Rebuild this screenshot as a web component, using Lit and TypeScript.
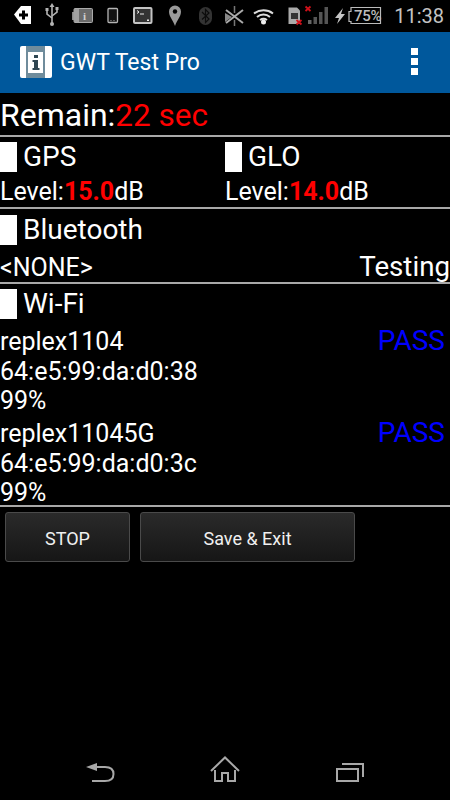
import { LitElement, html, css, svg } from "lit";
import { customElement } from "lit/decorators.js";

const G = "#b4b4b4";
const statusIcons = svg`
  <!-- plus tag -->
  <path d="M14 14.500 L21 6 H31 V24 H21 Z" fill="#fff"/>
  <path d="M22 10.500h3v3h3v3h-3v3h-3v-3h-3v-3h3z" fill="#000"/>
  <!-- usb -->
  <g fill="none" stroke="${G}" stroke-width="1.600">
    <path d="M52 6V24"/><path d="M47 10v4l5 4M57 9v3l-5 4"/>
  </g>
  <path d="M52 3l2.500 4h-5z" fill="${G}"/><circle cx="52" cy="24" r="2" fill="${G}"/>
  <rect x="45.500" y="8" width="3" height="3" fill="${G}"/><rect x="55.500" y="7" width="3" height="3" fill="${G}"/>
  <!-- battery info -->
  <rect x="72" y="12" width="2" height="8" fill="#888"/>
  <rect x="74" y="8.500" width="18.500" height="14" rx="1" fill="#6a6a6a" stroke="#aaa" stroke-width="1"/>
  <rect x="74" y="9" width="5" height="13" fill="#a0a0a0"/>
  <text x="83" y="20" font-family="Liberation Serif" font-size="11" font-weight="700" fill="#d0d0d0">i</text>
  <!-- phone -->
  <rect x="108" y="8.500" width="9.500" height="14" rx="1" fill="#111" stroke="${G}" stroke-width="1.300"/>
  <circle cx="111" cy="20.500" r=".6" fill="${G}"/><circle cx="114" cy="20.500" r=".6" fill="${G}"/>
  <!-- terminal -->
  <rect x="134" y="8" width="17.500" height="15" rx="1" fill="#333" stroke="#c4c4c4" stroke-width="2"/>
  <path d="M137 10.500l2 1.500-2 1.500M140 14h4" stroke="#eee" stroke-width="1" fill="none"/>
  <rect x="147" y="19.500" width="2" height="1.500" fill="#eee"/>
  <!-- pin -->
  <path d="M175 26 C172.500 19 169 16.500 169 11.500 A6 6 0 0 1 181 11.500 C181 16.500 177.500 19 175 26Z" fill="#999"/>
  <circle cx="175" cy="11.500" r="2.200" fill="#000"/>
  <!-- bluetooth -->
  <rect x="199" y="7" width="13" height="18" rx="6.500" fill="#333"/>
  <path d="M202 12l7 7-3.500 3.500V9.500L209 13l-7 6.500" fill="none" stroke="#0c0c0c" stroke-width="1.200"/>
  <!-- x antenna -->
  <path d="M226 10l17 13M243 10l-17 13" stroke="#aaa" stroke-width="2"/>
  <path d="M225 13l7 4-7 5z" fill="#888"/>
  <path d="M234.500 6v7M234.500 20v6" stroke="#777" stroke-width="1.500"/>
  <!-- wifi -->
  <g fill="none" stroke="#ddd" stroke-width="2">
    <path d="M254 13.500a16 16 0 0 1 19 0"/><path d="M257 17a10 10 0 0 1 13 0"/><path d="M260 20a6 6 0 0 1 7 0"/>
  </g>
  <circle cx="263.500" cy="22" r="2.500" fill="#eee"/>
  <!-- sim -->
  <path d="M288.500 7.500H297l3 3V24H288.500Z" fill="#aaa"/>
  <rect x="291" y="13" width="7" height="6" fill="#333"/>
  <path d="M296.500 20l5 4.500M301.500 20l-5 4.500" stroke="#d0101a" stroke-width="1.800"/>
  <path d="M305.500 6.500l5 4.500M310.500 6.500l-5 4.500" stroke="#d0101a" stroke-width="1.800"/>
  <!-- signal -->
  <rect x="308" y="20" width="3.500" height="4" fill="#666"/>
  <rect x="313.500" y="17" width="3.500" height="7" fill="#555"/>
  <rect x="319" y="12" width="3.500" height="12" fill="#555"/>
  <rect x="324.500" y="7" width="3.500" height="17" fill="#555"/>
  <!-- bolt -->
  <path d="M343 8l-8 10h4l-2 6 8-10h-4z" fill="#c4c4c4"/>
  <!-- battery outline -->
  <path d="M351 11.500H349V21.500H351V23.500H380.500V7.500H351Z" fill="none" stroke="#bbb" stroke-width="1.200"/>
`;

@customElement("app-root")
export class AppRoot extends LitElement {
  static styles = css`
    :host {
      display: block;
      width: 450px;
      height: 800px;
      background: #000;
      color: #fff;
      font-family: Roboto, "Liberation Sans", sans-serif;
      position: relative;
      overflow: hidden;
    }
    .status {
      height: 32px;
      position: relative;
    }
    .status svg {
      position: absolute;
      inset: 0;
    }
    .pct {
      position: absolute;
      left: 354px;
      top: 8px;
      font-size: 15px;
      line-height: 17px;
      font-weight: 500;
      color: #bdbdbd;
      letter-spacing: -0.3px;
    }
    .clock {
      position: absolute;
      right: 6px;
      top: 3px;
      font-size: 20px;
      line-height: 26px;
      color: #c4c4c4;
    }
    .bar {
      height: 61px;
      background: #00589c;
      display: flex;
      align-items: center;
      padding: 0 0 2px 20px;
      box-sizing: border-box;
    }
    .logo {
      width: 32px;
      height: 32px;
      flex: none;
    }
    .title {
      margin: 1px 0 0 8px;
      font-size: 23px;
      flex: 1;
    }
    .dots {
      display: flex;
      flex-direction: column;
      gap: 3px;
      margin-right: 32px;
    }
    .dots i {
      display: block;
      width: 7px;
      height: 7px;
      background: #fff;
    }
    .remain {
      height: 42px;
      font-size: 32px;
      line-height: 44px;
      box-sizing: border-box;
      white-space: nowrap;
    }
    .remain .red {
      font-size: 31.500px;
    }
    .red {
      color: #f00;
    }
    hr {
      margin: 0;
      border: 0;
      height: 2px;
      background: #a8a8a8;
    }
    .sat {
      height: 70px;
      display: grid;
      grid-template-columns: 225px 225px;
    }
    .check {
      display: flex;
      align-items: center;
      height: 39px;
      font-size: 28px;
    }
    .check i {
      display: block;
      width: 17px;
      height: 30px;
      background: #fff;
      margin-right: 6px;
      flex: none;
    }
    .level {
      font-size: 25px;
      line-height: 32px;
      height: 32px;
      white-space: nowrap;
    }
    .level b {
      color: #f00;
      font-weight: 700;
    }
    .bt {
      height: 73px;
    }
    .bt .check {
      height: 41px;
    }
    .between {
      display: flex;
      justify-content: space-between;
      align-items: baseline;
      font-size: 25px;
      line-height: 34px;
    }
    .testing {
      font-size: 27.700px;
    }
    .wifi {
      height: 221px;
    }
    .wifi .check {
      height: 39px;
      margin-bottom: 4px;
    }
    .ap {
      font-size: 25px;
      height: 92px;
      position: relative;
    }
    .ap div {
      height: 29.500px;
      line-height: 30px;
    }
    .pass {
      position: absolute;
      right: 5px;
      top: -3px;
      color: #00f;
      font-size: 28px;
    }
    .actions {
      display: flex;
      gap: 10px;
      padding: 5px 0 0 5px;
    }
    button {
      height: 50px;
      border: 1px solid #4a4a4a;
      border-radius: 3px;
      background: linear-gradient(#2a2a2a, #161616);
      color: #f0f0f0;
      font: 400 18px Roboto, sans-serif;
      padding: 2px 0 0;
    }
    .stop {
      width: 125px;
    }
    .save {
      width: 215px;
    }
    .nav {
      position: absolute;
      left: 0;
      bottom: 0;
    }
  `;

  render() {
    return html`
      <div class="status">
        <svg width="450" height="32" viewBox="0 0 450 32">${statusIcons}</svg>
        <span class="pct">75%</span>
        <span class="clock">11:38</span>
      </div>
      <div class="bar">
        <svg class="logo" viewBox="0 0 32 32">
          <rect x="0" y="0" width="32" height="32" rx="2" fill="#fff" />
          <rect x="6" y="0" width="19" height="32" fill="#6f8c9c" />
          <rect x="8" y="6" width="15" height="21" fill="#fff" />
          <rect x="14" y="9" width="4" height="3" fill="#2f4652" />
          <path d="M12.500 14H18V22H19.500V24H12.500V22H14V16H12.500Z" fill="#2f4652" />
        </svg>
        <span class="title">GWT Test Pro</span>
        <div class="dots"><i></i><i></i><i></i></div>
      </div>
      <div class="remain">Remain:<span class="red">22 sec</span></div>
      <hr />
      <div class="sat">
        <div>
          <div class="check"><i></i>GPS</div>
          <div class="level">Level:<b>15.0</b>dB</div>
        </div>
        <div>
          <div class="check"><i></i>GLO</div>
          <div class="level">Level:<b>14.0</b>dB</div>
        </div>
      </div>
      <hr />
      <div class="bt">
        <div class="check"><i></i>Bluetooth</div>
        <div class="between"><span>&lt;NONE&gt;</span><span class="testing">Testing</span></div>
      </div>
      <hr />
      <div class="wifi">
        <div class="check"><i></i>Wi-Fi</div>
        <div class="ap">
          <div>replex1104</div>
          <div>64:e5:99:da:d0:38</div>
          <div>99%</div>
          <span class="pass">PASS</span>
        </div>
        <div class="ap">
          <div>replex11045G</div>
          <div>64:e5:99:da:d0:3c</div>
          <div>99%</div>
          <span class="pass">PASS</span>
        </div>
      </div>
      <hr />
      <div class="actions">
        <button class="stop">STOP</button>
        <button class="save">Save &amp; Exit</button>
      </div>
      <svg class="nav" width="450" height="60" viewBox="0 740 450 60">
        <g fill="none" stroke="#a8a8a8" stroke-width="2">
          <path d="M93 767H105Q113.500 767 113.500 774Q113.500 781 105 781H92" />
          <path d="M211 771L225 757.500L239 771M215 770V781H222V773H228V781H235V770" />
          <path d="M337 769H358V781H337Z" />
          <path d="M342 764H363V777" />
        </g>
        <path d="M86 767L97 763V771Z" fill="#a8a8a8" />
      </svg>
    `;
  }
}
